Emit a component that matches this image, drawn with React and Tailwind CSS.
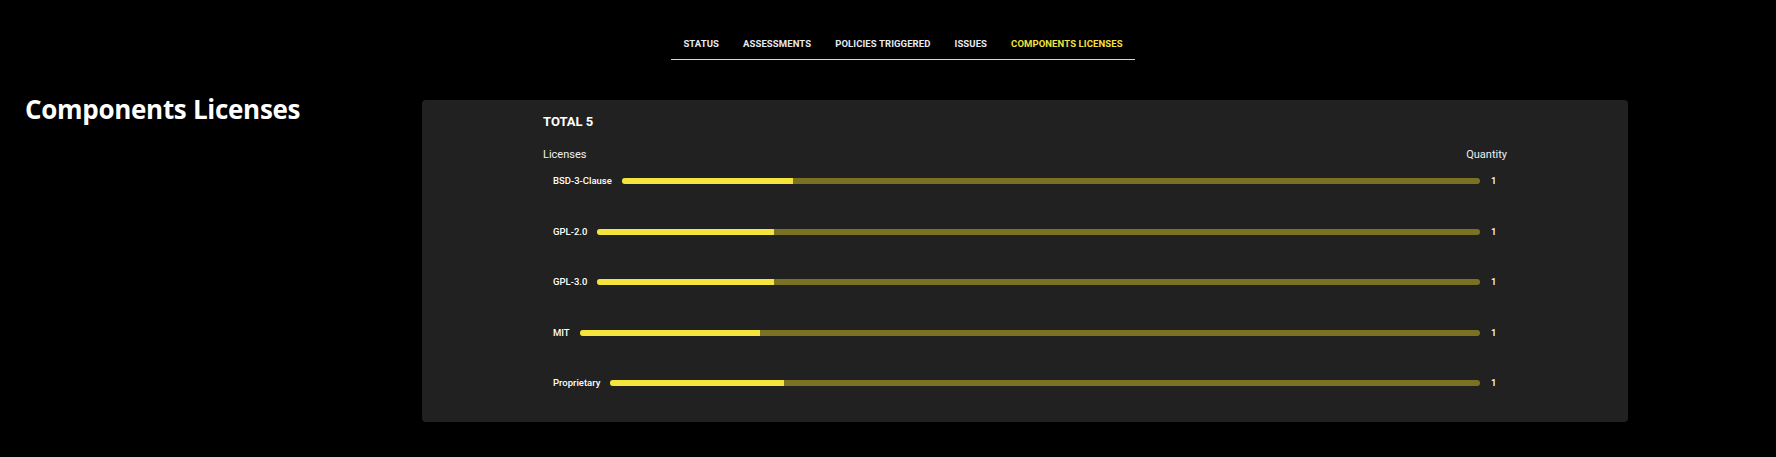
import React from "react";

const tabs = ["STATUS", "ASSESSMENTS", "POLICIES TRIGGERED", "ISSUES", "COMPONENTS LICENSES"];
const rows = [
  { name: "BSD-3-Clause", qty: 1 },
  { name: "GPL-2.0", qty: 1 },
  { name: "GPL-3.0", qty: 1 },
  { name: "MIT", qty: 1 },
  { name: "Proprietary", qty: 1 },
];
const total = 5;

export default function App() {
  return (
    <div className="w-full h-[457px] bg-black overflow-hidden" style={{ fontFamily: "Roboto, 'Liberation Sans', sans-serif" }}>
      <div className="flex justify-center pt-[31px] pl-[30px]">
        <div className="flex border-b border-[#d8d8d8] h-[29px]">
          {tabs.map((t, i) => {
            const active = i === tabs.length - 1;
            return (
              <div
                key={t}
                className={
                  "flex items-center px-[12px] pb-[2px] h-[29px] text-[9.5px] font-bold tracking-[0.1px] " +
                  (active ? "text-[#f3e33c] border-b border-[#f3e33c] -mb-px" : "text-[#e6eaf2]")
                }
              >
                {t}
              </div>
            );
          })}
        </div>
      </div>

      <div className="flex mt-[40px]">
        <div className="w-[422px] pl-[25px] shrink-0">
          <h1
            className="text-white text-[26px] font-bold leading-[30px] -mt-[6px] tracking-[-0.3px]"
            style={{ fontFamily: "'Open Sans', 'Noto Sans', sans-serif" }}
          >
            Components Licenses
          </h1>
        </div>
        <div className="w-[1206px] h-[322px] shrink-0 bg-[#212121] rounded-[4px] px-[121px] pt-[14px]">
          <div className="text-white text-[13px] font-bold leading-[16px]">TOTAL {total}</div>
          <div className="flex justify-between mt-[18px] text-[11px] leading-[14px] text-[#eef0f4]">
            <span>Licenses</span>
            <span>Quantity</span>
          </div>
          <div className="flex flex-col mt-[-6.3px]">
            {rows.map((r) => (
              <div key={r.name} className="flex items-center h-[50.6px]">
                <span className="pl-[10px] text-[9.5px] font-medium text-white leading-[12px]">{r.name}</span>
                <div className="flex-1 ml-[10px] h-[6px] rounded-full bg-[#7a7123] overflow-hidden">
                  <div className="h-full bg-[#f5e43c]" style={{ width: `${(r.qty / total) * 100}%` }} />
                </div>
                <span className="w-[27px] pl-[11px] text-[9.5px] font-medium text-white leading-[12px]">{r.qty}</span>
              </div>
            ))}
          </div>
        </div>
      </div>
    </div>
  );
}
